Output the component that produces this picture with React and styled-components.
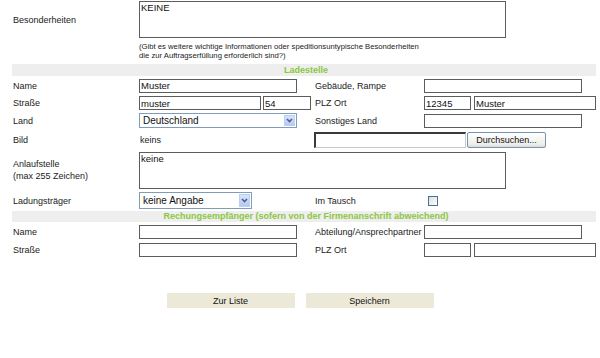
import React from "react";
import styled, { createGlobalStyle } from "styled-components";

const GlobalStyle = createGlobalStyle`
  body {
    margin: 0;
    background: #fff;
    font-family: "Liberation Sans", Arial, sans-serif;
    font-size: 9px;
    color: #222;
  }
`;

const Page = styled.div`
  width: 584px;
  margin-left: 12px;
`;

const Row = styled.div`
  display: grid;
  grid-template-columns: 127px 175px 110px 1fr;
  align-items: center;
  height: ${(p) => p.h}px;
`;

const Label = styled.div`
  padding-left: 1px;
  line-height: 12px;
`;

const Field = styled.div`
  display: flex;
  align-items: center;
  gap: ${(p) => p.gap || 0}px;
  grid-column: ${(p) => p.span || "auto"};
`;

const TextInput = styled.input`
  box-sizing: border-box;
  width: ${(p) => p.w}px;
  height: 14px;
  margin: 0;
  padding: 0 1px;
  border: 1px solid #5c5c5c;
  background: #fff;
  font-family: "Liberation Sans", Arial, sans-serif;
  font-size: 9.5px;
  color: #111;
  outline: none;
`;

const TextArea = styled.textarea`
  box-sizing: border-box;
  width: 367px;
  height: 37px;
  margin: 0;
  padding: 0 1px;
  border: 1px solid #5c5c5c;
  resize: none;
  font-family: "Liberation Sans", Arial, sans-serif;
  font-size: 9.5px;
  line-height: 11px;
  color: #111;
  overflow: hidden;
`;

const Hint = styled.div`
  grid-column: 2 / 5;
  align-self: start;
  padding-top: 3px;
  font-size: 7.7px;
  line-height: 9px;
  color: #222;
  white-space: nowrap;
`;

const Bar = styled.div`
  height: ${(p) => p.h}px;
  line-height: ${(p) => p.h}px;
  background: #eeeeee;
  color: #8cc63f;
  font-weight: bold;
  font-size: 9px;
  text-align: center;
  padding-left: 4px;
`;

const SelectBox = styled.div`
  box-sizing: border-box;
  width: ${(p) => p.w}px;
  height: ${(p) => p.h}px;
  border: 1px solid #7f9db9;
  background: #fff;
  display: flex;
  align-items: center;
  justify-content: space-between;
  padding: 0 1px 0 3px;
  font-size: 10px;
  color: #111;
`;

const ArrowBtn = styled.div`
  box-sizing: border-box;
  width: 11px;
  height: ${(p) => p.h}px;
  border: 1px solid #b9cdf5;
  background: linear-gradient(#d8e4fc, #b6c9f4);
  display: flex;
  align-items: center;
  justify-content: center;
`;

const FileBox = styled.div`
  box-sizing: border-box;
  width: 152px;
  height: 16px;
  border-style: solid;
  border-width: 2px 1px 1px 2px;
  border-color: #3a3a3a #c8c8c8 #c8c8c8 #3a3a3a;
  background: #fff;
`;

const BrowseButton = styled.button`
  box-sizing: border-box;
  width: 79px;
  height: 16px;
  margin: 0 0 0 1px;
  padding: 0;
  border: 1px solid #7593b5;
  border-radius: 2px;
  background: linear-gradient(#ffffff, #eeeeea 80%, #dcdcd4);
  font-family: "Liberation Sans", Arial, sans-serif;
  font-size: 9px;
  color: #111;
`;

const Check = styled.div`
  box-sizing: border-box;
  width: 10px;
  height: 10px;
  margin-left: 4px;
  border: 1px solid #4a6f97;
  background: linear-gradient(135deg, #dcdcd7, #fff);
`;

const Plain = styled.span`
  padding-left: 1px;
`;

const Actions = styled.div`
  display: flex;
  justify-content: center;
  gap: 11px;
  width: 600px;
  margin-left: -12px;
  margin-top: 35px;
`;

const ActionButton = styled.button`
  width: 128px;
  height: 15px;
  margin: 0;
  padding: 0;
  border: none;
  background: #ece9d8;
  font-family: "Liberation Sans", Arial, sans-serif;
  font-size: 9px;
  color: #111;
`;

const Chevron = () => (
  <svg width="7" height="5" viewBox="0 0 7 5">
    <path d="M1 1 L3.5 3.5 L6 1" fill="none" stroke="#4d6185" strokeWidth="1.6" />
  </svg>
);

const Select = ({ w, h, value }) => (
  <SelectBox w={w} h={h}>
    <span>{value}</span>
    <ArrowBtn h={h - 4}>
      <Chevron />
    </ArrowBtn>
  </SelectBox>
);

export default function App() {
  return (
    <>
      <GlobalStyle />
      <Page>
        <Row h={39}>
          <Label>Besonderheiten</Label>
          <Field span="2 / 5">
            <TextArea defaultValue="KEINE" />
          </Field>
        </Row>
        <Row h={25}>
          <Hint>
            (Gibt es weitere wichtige Informationen oder speditionsuntypische Besonderheiten
            <br />
            die zur Auftragserfüllung erforderlich sind?)
          </Hint>
        </Row>
        <Bar h={12}>Ladestelle</Bar>

        <Row h={19}>
          <Label>Name</Label>
          <Field>
            <TextInput w={158} defaultValue="Muster" />
          </Field>
          <Label>Gebäude, Rampe</Label>
          <Field>
            <TextInput w={158} />
          </Field>
        </Row>
        <Row h={16}>
          <Label>Straße</Label>
          <Field gap={2}>
            <TextInput w={122} defaultValue="muster" />
            <TextInput w={48} defaultValue="54" />
          </Field>
          <Label>PLZ Ort</Label>
          <Field gap={3}>
            <TextInput w={47} defaultValue="12345" />
            <TextInput w={122} defaultValue="Muster" />
          </Field>
        </Row>
        <Row h={19}>
          <Label>Land</Label>
          <Field>
            <Select w={158} h={15} value="Deutschland" />
          </Field>
          <Label>Sonstiges Land</Label>
          <Field>
            <TextInput w={158} />
          </Field>
        </Row>
        <Row h={20}>
          <Label>Bild</Label>
          <Field>
            <Plain>keins</Plain>
          </Field>
          <Field span="3 / 5">
            <FileBox />
            <BrowseButton>Durchsuchen...</BrowseButton>
          </Field>
        </Row>
        <Row h={40}>
          <Label>
            Anlaufstelle
            <br />
            (max 255 Zeichen)
          </Label>
          <Field span="2 / 5">
            <TextArea defaultValue="keine" />
          </Field>
        </Row>
        <Row h={21}>
          <Label>Ladungsträger</Label>
          <Field>
            <Select w={113} h={17} value="keine Angabe" />
          </Field>
          <Label>Im Tausch</Label>
          <Field>
            <Check />
          </Field>
        </Row>
        <Bar h={11}>Rechungsempfänger (sofern von der Firmenanschrift abweichend)</Bar>

        <Row h={20}>
          <Label>Name</Label>
          <Field>
            <TextInput w={158} />
          </Field>
          <Label>Abteilung/Ansprechpartner</Label>
          <Field>
            <TextInput w={158} />
          </Field>
        </Row>
        <Row h={16}>
          <Label>Straße</Label>
          <Field>
            <TextInput w={158} />
          </Field>
          <Label>PLZ Ort</Label>
          <Field gap={3}>
            <TextInput w={47} />
            <TextInput w={122} />
          </Field>
        </Row>

        <Actions>
          <ActionButton>Zur Liste</ActionButton>
          <ActionButton>Speichern</ActionButton>
        </Actions>
      </Page>
    </>
  );
}
